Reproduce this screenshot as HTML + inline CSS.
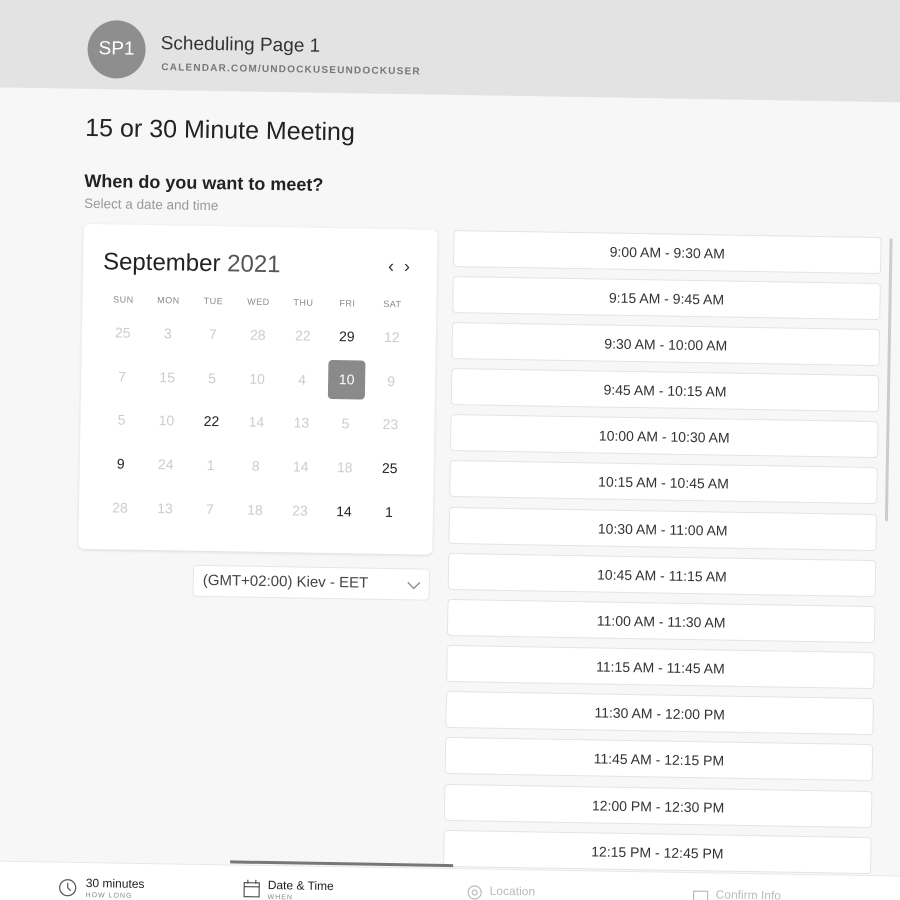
<!DOCTYPE html>
<html><head><meta charset="utf-8"><style>
html,body{margin:0;padding:0;width:900px;height:900px;overflow:hidden;background:#f7f7f7;font-family:"Liberation Sans",sans-serif;}
#clip{position:fixed;left:0;top:0;width:900px;height:900px;overflow:hidden;}
#w{position:absolute;left:0;top:0;width:900px;height:900px;transform:rotate(0.95deg);transform-origin:450px 450px;}
.a{position:absolute;}
#hdr{left:-60px;top:-80px;width:1020px;height:175px;background:#e3e3e3;}
#main{left:-60px;top:95px;width:1020px;height:773px;background:#f7f7f7;}
.av{left:81px;top:26px;width:58px;height:58px;border-radius:50%;background:#8e8e8e;color:#fff;font-size:19px;line-height:58px;text-align:center;}
.t{color:#333;white-space:nowrap;}
#card{left:80px;top:230px;width:354px;height:325px;background:#fff;border-radius:6px;box-shadow:0 1px 3px rgba(0,0,0,.12);}
.d{position:absolute;width:40px;text-align:center;font-size:14px;color:#ccc;}
.dk{color:#222;}
.hd{position:absolute;width:40px;text-align:center;font-size:9px;color:#888;letter-spacing:.5px;}
.slot{position:absolute;left:450px;width:428px;height:37px;background:#fff;border:1px solid #e4e4e4;border-radius:4px;text-align:center;line-height:37px;font-size:14px;color:#333;box-sizing:border-box;}
</style></head><body><div id="clip"><div id="w">
<div class="a" id="hdr"></div>
<div class="a" id="main"></div>
<div class="a av">SP1</div>
<div class="a t" style="left:154px;top:38px;font-size:19px;">Scheduling Page 1</div>
<div class="a t" style="left:155px;top:67px;font-size:10px;font-weight:bold;letter-spacing:1.2px;color:#777;">CALENDAR.COM/UNDOCKUSEUNDOCKUSER</div>
<div class="a t" style="left:80px;top:120px;font-size:25px;color:#222;">15 or 30 Minute Meeting</div>
<div class="a t" style="left:80px;top:177px;font-size:18px;font-weight:bold;color:#222;">When do you want to meet?</div>
<div class="a t" style="left:80px;top:202px;font-size:13.5px;color:#999;">Select a date and time</div>
<div class="a" id="card"></div>
<div class="a t" style="left:100px;top:254px;font-size:24px;color:#222;">September <span style="color:#555">2021</span></div>
<div class="a t" style="left:385px;top:257px;font-size:18px;color:#333;">‹&nbsp;&nbsp;›</div>
<div class="a" style="left:0;top:0;">
<div class="hd" style="left:101px;top:300px">SUN</div><div class="hd" style="left:146px;top:300px">MON</div><div class="hd" style="left:191px;top:300px">TUE</div><div class="hd" style="left:236px;top:300px">WED</div><div class="hd" style="left:281px;top:300px">THU</div><div class="hd" style="left:325px;top:300px">FRI</div><div class="hd" style="left:370px;top:300px">SAT</div>
<div class="d" style="left:101px;top:330px">25</div><div class="d" style="left:146px;top:330px">3</div><div class="d" style="left:191px;top:330px">7</div><div class="d" style="left:236px;top:330px">28</div><div class="d" style="left:281px;top:330px">22</div><div class="d dk" style="left:325px;top:330px">29</div><div class="d" style="left:370px;top:330px">12</div>
<div class="d" style="left:101px;top:374px">7</div><div class="d" style="left:146px;top:374px">15</div><div class="d" style="left:191px;top:374px">5</div><div class="d" style="left:236px;top:374px">10</div><div class="d" style="left:281px;top:374px">4</div>
<div class="a" style="left:327px;top:362px;width:37px;height:39px;border-radius:4px;background:#8a8a8a;color:#fff;font-size:14px;line-height:39px;text-align:center;">10</div>
<div class="d" style="left:370px;top:374px">9</div>
<div class="d" style="left:101px;top:417px">5</div><div class="d" style="left:146px;top:417px">10</div><div class="d dk" style="left:191px;top:417px">22</div><div class="d" style="left:236px;top:417px">14</div><div class="d" style="left:281px;top:417px">13</div><div class="d" style="left:325px;top:417px">5</div><div class="d" style="left:370px;top:417px">23</div>
<div class="d dk" style="left:101px;top:461px">9</div><div class="d" style="left:146px;top:461px">24</div><div class="d" style="left:191px;top:461px">1</div><div class="d" style="left:236px;top:461px">8</div><div class="d" style="left:281px;top:461px">14</div><div class="d" style="left:325px;top:461px">18</div><div class="d dk" style="left:370px;top:461px">25</div>
<div class="d" style="left:101px;top:505px">28</div><div class="d" style="left:146px;top:505px">13</div><div class="d" style="left:191px;top:505px">7</div><div class="d" style="left:236px;top:505px">18</div><div class="d" style="left:281px;top:505px">23</div><div class="d dk" style="left:325px;top:505px">14</div><div class="d dk" style="left:370px;top:505px">1</div>
</div>
<div class="a" style="left:195px;top:569px;width:237px;height:32px;background:#fff;border:1px solid #e6e6e6;border-radius:4px;box-sizing:border-box;"></div>
<div class="a t" style="left:205px;top:576px;font-size:15px;color:#444;">(GMT+02:00) Kiev - EET</div>
<svg class="a" style="left:409px;top:581px" width="14" height="10"><path d="M1 2 L7 8 L13 2" fill="none" stroke="#888" stroke-width="1.3"/></svg>
<div class="slot" style="top:230px">9:00 AM - 9:30 AM</div>
<div class="slot" style="top:276px">9:15 AM - 9:45 AM</div>
<div class="slot" style="top:322px">9:30 AM - 10:00 AM</div>
<div class="slot" style="top:368px">9:45 AM - 10:15 AM</div>
<div class="slot" style="top:414px">10:00 AM - 10:30 AM</div>
<div class="slot" style="top:460px">10:15 AM - 10:45 AM</div>
<div class="slot" style="top:507px">10:30 AM - 11:00 AM</div>
<div class="slot" style="top:553px">10:45 AM - 11:15 AM</div>
<div class="slot" style="top:599px">11:00 AM - 11:30 AM</div>
<div class="slot" style="top:645px">11:15 AM - 11:45 AM</div>
<div class="slot" style="top:691px">11:30 AM - 12:00 PM</div>
<div class="slot" style="top:737px">11:45 AM - 12:15 PM</div>
<div class="slot" style="top:784px">12:00 PM - 12:30 PM</div>
<div class="slot" style="top:830px">12:15 PM - 12:45 PM</div>
<div class="a" style="left:886px;top:231px;width:3px;height:283px;background:#ccc;border-radius:2px;"></div>
<div class="a" style="left:-60px;top:868px;width:1020px;height:60px;background:#fff;border-top:1px solid #e8e8e8;"></div>
<div class="a" style="left:237px;top:864px;width:223px;height:3px;background:#777;"></div>
<svg class="a" style="left:65px;top:884px" width="20" height="20"><circle cx="10" cy="10" r="8" fill="none" stroke="#555" stroke-width="1.2"/><path d="M10 5 V10 L13 13" fill="none" stroke="#555" stroke-width="1.2"/></svg>
<div class="a t" style="left:93px;top:882px;font-size:12px;color:#222;">30 minutes</div>
<div class="a t" style="left:93px;top:898px;font-size:7px;color:#888;letter-spacing:1px;">HOW LONG</div>
<svg class="a" style="left:250px;top:882px" width="18" height="20"><rect x="1.5" y="4" width="15" height="14" fill="none" stroke="#555" stroke-width="1.2"/><path d="M1.5 8 H16.5 M5 1 V5 M13 1 V5" stroke="#555" stroke-width="1.2"/></svg>
<div class="a t" style="left:275px;top:881px;font-size:12px;color:#222;">Date &amp; Time</div>
<div class="a t" style="left:275px;top:897px;font-size:7px;color:#888;letter-spacing:1px;">WHEN</div>
<svg class="a" style="left:474px;top:884px" width="16" height="16"><circle cx="8" cy="8" r="6.5" fill="none" stroke="#bbb" stroke-width="1.2"/><circle cx="8" cy="8" r="2.5" fill="none" stroke="#bbb" stroke-width="1.2"/></svg>
<div class="a t" style="left:497px;top:883px;font-size:12px;color:#bbb;">Location</div>
<svg class="a" style="left:700px;top:886px" width="16" height="14"><rect x="1" y="1" width="14" height="12" fill="none" stroke="#bbb" stroke-width="1.2"/></svg>
<div class="a t" style="left:723px;top:883px;font-size:12px;color:#bbb;">Confirm Info</div>
</div></div></body></html>
